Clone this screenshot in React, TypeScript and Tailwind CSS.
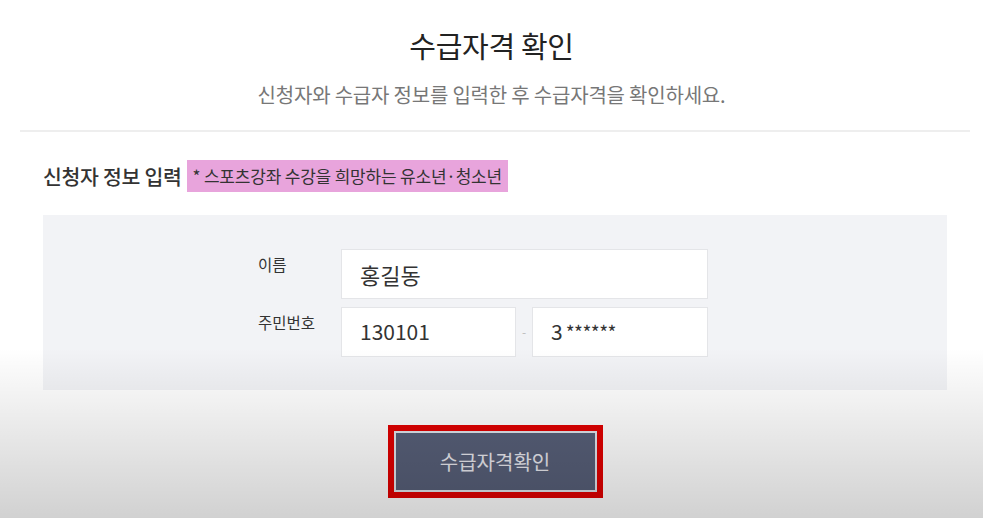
const font = { fontFamily: '"Noto Sans CJK KR", "Noto Sans", sans-serif' }

export default function App() {
  return (
    <div className="relative h-[518px] w-[983px] overflow-hidden bg-white text-[#333]" style={font}>
      <div className="flex flex-col items-center pt-[25px]">
        <h1 className="text-[29px] leading-[40px] font-normal text-[#222] tracking-[-0.3px]">수급자격 확인</h1>
        <p className="mt-[16px] text-[20px] leading-[28px] text-[#777] tracking-[-0.2px]">
          신청자와 수급자 정보를 입력한 후 수급자격을 확인하세요.
        </p>
      </div>

      <div className="ml-[20px] mr-[13px] mt-[21px] h-[2px] bg-[#eeeeee]" />

      <div className="ml-[43px] mr-[36px]">
        <div className="mt-[28px] flex items-center gap-[5px]">
          <span className="text-[20.5px] leading-[28px] font-medium text-[#333] tracking-[-0.3px]">신청자 정보 입력</span>
          <span className="bg-[#e8a4dc] px-[6px] py-[2px] text-[17px] leading-[28px] text-[#333] tracking-[-0.2px]">
            * 스포츠강좌 수강을 희망하는 유소년·청소년
          </span>
        </div>

        <div className="mt-[23px] h-[175px] bg-[#f2f3f6] pt-[34px]">
          <div className="ml-[215px] flex flex-col gap-[8px]">
            <div className="flex">
              <label className="w-[83px] pt-[4px] text-[15.5px] leading-[22px] text-[#333]">이름</label>
              <div className="flex h-[50px] w-[367px] items-center border border-[#e4e5e8] bg-white px-[18px] text-[22px] text-[#333]">
                홍길동
              </div>
            </div>
            <div className="flex">
              <label className="w-[83px] pt-[4px] text-[15.5px] leading-[22px] text-[#333]">주민번호</label>
              <div className="flex h-[50px] w-[175px] items-center border border-[#e4e5e8] bg-white px-[18px] text-[21px] text-[#333]">
                130101
              </div>
              <div className="flex w-[16px] items-center justify-center text-[12px] text-[#bbb]">-</div>
              <div className="flex h-[50px] w-[176px] items-center border border-[#e4e5e8] bg-white px-[18px] text-[21px] text-[#333]">
                3<span className="ml-[3px] text-[19px] tracking-[-0.5px]">******</span>
              </div>
            </div>
          </div>
        </div>
      </div>

      <div className="mt-[35px] flex justify-center">
        <div className="ml-[7px] border-[6px] border-[#e00000]">
          <button className="flex h-[61px] w-[203px] items-center justify-center border-2 border-[#dfe3ea] bg-[#575f78] text-[20px] text-[#e8e8ee]">
            수급자격확인
          </button>
        </div>
      </div>

      <div className="pointer-events-none absolute inset-x-0 bottom-0 h-[170px] bg-gradient-to-b from-transparent to-black/[0.18]" />
    </div>
  )
}
